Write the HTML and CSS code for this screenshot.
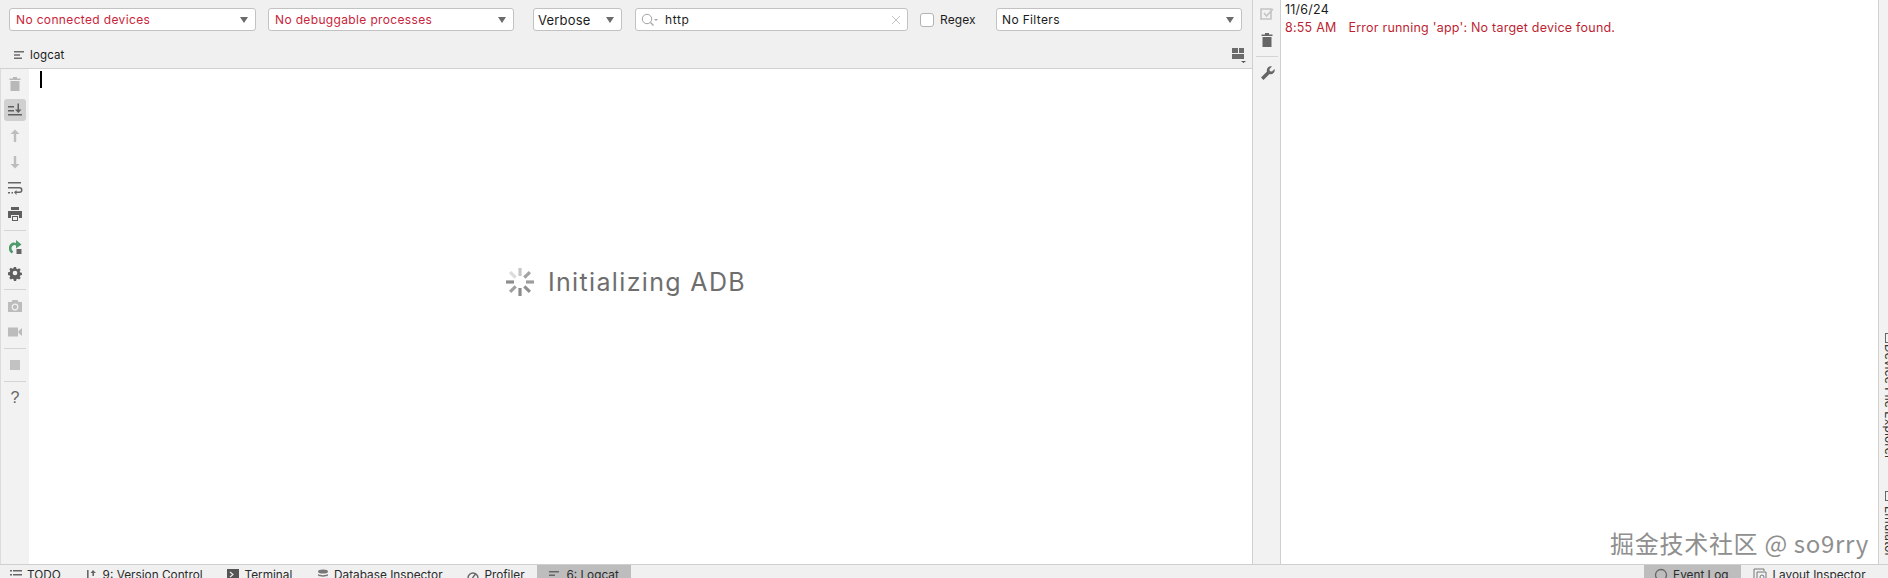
FILE: index.html
```html
<!DOCTYPE html>
<html lang="en">
<head>
<meta charset="utf-8">
<title>logcat</title>
<link rel="stylesheet" href="styles.css">
</head>
<body>
<div class="app">
  <div class="workspace">
    <section class="logcat">
      <div class="filters">
        <div class="combo combo-device"><span class="err">No connected devices</span><i class="caret"></i></div>
        <div class="combo combo-process"><span class="err">No debuggable processes</span><i class="caret"></i></div>
        <div class="combo combo-level"><span>Verbose</span><i class="caret"></i></div>
        <div class="search">
          <svg class="search-ico" viewBox="0 0 20 16" width="20" height="16"><circle cx="7" cy="7" r="4.7" fill="none" stroke="#a3a3a3" stroke-width="1"/><path d="M10.5 10.5l3 3" stroke="#a3a3a3" stroke-width="1.2"/><path d="M14 7h4l-2 2z" fill="#a3a3a3"/></svg>
          <span class="search-text">http</span>
          <svg class="clear" viewBox="0 0 10 10" width="10" height="10"><path d="M1 1l8 8M9 1l-8 8" stroke="#c4c4c4" stroke-width="1"/></svg>
        </div>
        <label class="regex"><i class="check"></i><span>Regex</span></label>
        <div class="combo combo-filter"><span>No Filters</span><i class="caret"></i></div>
      </div>
      <div class="tabrow">
        <div class="tab">
          <svg viewBox="0 0 12 10" width="12" height="10"><path d="M0 1h10v1.600H0zM0 4.200h6v1.600H0zM0 7.400h8V9H0z" fill="#6b6b6b"/></svg>
          <span>logcat</span>
        </div>
        <svg class="layout-ico" viewBox="0 0 16 16" width="16" height="16"><path d="M1 1h6v5H1zM8 1h5v5H8zM1 7h12v5H1z" fill="#6b6b6b"/><path d="M10 14h5l-2.500 2z" fill="#555"/></svg>
      </div>
      <div class="logbody">
        <aside class="rail">
          <button class="tool dim"><svg viewBox="0 0 16 16"><path d="M6 1h4v1.500h3.500V4h-11V2.500H6zM3.500 5h9v10h-9z" fill="#b8b8b8"/></svg></button>
          <button class="tool active"><svg viewBox="0 0 16 16"><path d="M1 4h6v1.500H1zM1 8h6v1.500H1zM1 12h14v1.500H1z" fill="#5f5f5f"/><path d="M10.500 1.500h1.500v6h2.500L11.250 11 8 7.500h2.500z" fill="#5f5f5f"/></svg></button>
          <button class="tool dim"><svg viewBox="0 0 16 16"><path d="M6.800 14V6H3.500L8 1.500 12.500 6H9.200v8z" fill="#bdbdbd"/></svg></button>
          <button class="tool dim"><svg viewBox="0 0 16 16"><path d="M6.800 2v8H3.500L8 14.500 12.500 10H9.200V2z" fill="#bdbdbd"/></svg></button>
          <button class="tool"><svg viewBox="0 0 16 16"><path d="M1 2h13v1.500H1zM1 7h11.500a2.500 2.500 0 0 1 0 6H9.500V15L7 12.250 9.500 10v1.500h3a1 1 0 0 0 0-3H1zM1 12h2v1.500H1zM4.500 12h1.500v1.500H4.500z" fill="#666"/></svg></button>
          <button class="tool"><svg viewBox="0 0 16 16"><path d="M4 1h8v3H4zM1 5h14v7h-3V9H4v3H1zM5 10h6v5H5z" fill="#5f5f5f"/><path d="M6 11h4v3H6z" fill="#f2f2f2"/></svg></button>
          <hr class="rule">
          <button class="tool tool-restart"><svg viewBox="0 0 16 16"><path d="M2 9a5 5 0 0 1 7-5V1L14.500 5.500 9 9.500V6.500A3 3 0 0 0 4.500 9c0 1.500.7 2.600 1.700 3.300L5 14.500A5.500 5.500 0 0 1 2 9z" fill="#4d9a6a"/><path d="M9.500 10h5v5h-5z" fill="#666"/></svg></button>
          <button class="tool"><svg viewBox="0 0 16 16"><path d="M6.700 1h2.600l.4 2 1.300.6 1.800-1.100 1.800 1.800-1.100 1.800.6 1.300 2 .4v2.600l-2 .4-.6 1.300 1.100 1.800-1.800 1.800-1.800-1.100-1.300.6-.4 2H6.700l-.4-2-1.300-.6-1.800 1.100-1.800-1.800 1.100-1.800-.6-1.300-2-.4V7.200l2-.4.6-1.300-1.100-1.800 1.800-1.800 1.800 1.100 1.300-.6z" transform="translate(1.100 1.100) scale(.86)" fill="#5f5f5f"/><circle cx="8" cy="8" r="2.300" fill="#f2f2f2"/></svg></button>
          <hr class="rule">
          <button class="tool"><svg viewBox="0 0 16 16"><path d="M5.500 2h5l1 2H15v10H1V4h3.500z" fill="#bcbcbc"/><circle cx="8" cy="9" r="2.800" fill="none" stroke="#f2f2f2" stroke-width="1.200"/></svg></button>
          <button class="tool"><svg viewBox="0 0 16 16"><path d="M1 3.500h10v9H1zM11.500 7l3.500-3v8l-3.500-3z" fill="#bcbcbc"/></svg></button>
          <hr class="rule">
          <button class="tool"><svg viewBox="0 0 16 16"><path d="M3 3h10v10H3z" fill="#c2c2c2"/></svg></button>
          <hr class="rule">
          <button class="tool help">?</button>
        </aside>
        <div class="console">
          <i class="caret-line"></i>
          <div class="status">
            <svg class="spinner" viewBox="0 0 30 30" width="30" height="30">
              <g stroke-width="3.200" stroke-linecap="butt">
                <path d="M15 1v8" stroke="#c6c6c6"/><path d="M24.900 5.100l-5.600 5.600" stroke="#a2a2a2"/><path d="M29 15h-8" stroke="#9d9d9d"/><path d="M24.900 24.900l-5.600-5.600" stroke="#8f8f8f"/>
                <path d="M15 29v-8" stroke="#8c8c8c"/><path d="M5.100 24.900l5.600-5.600" stroke="#a0a0a0"/><path d="M1 15h8" stroke="#8e8e8e"/><path d="M5.100 5.100l5.600 5.600" stroke="#dcdcdc"/>
              </g>
            </svg>
            <span>Initializing ADB</span>
          </div>
        </div>
      </div>
    </section>
    <aside class="rail rail-event">
      <button class="tool"><svg viewBox="0 0 16 16"><path d="M2 3h10v10H2z" fill="none" stroke="#c4c4c4" stroke-width="1.600"/><path d="M5 7l2.500 3L14 3" fill="none" stroke="#c4c4c4" stroke-width="1.600"/></svg></button>
      <button class="tool"><svg viewBox="0 0 16 16"><path d="M6 1h4v1.500h3.500V4h-11V2.500H6zM3.500 5h9v10h-9z" fill="#666"/></svg></button>
      <hr class="rule">
      <button class="tool"><svg viewBox="0 0 16 16"><path d="M2 12.500l6-6a4 4 0 0 1 5-5l-2.500 2.500.3 2.200 2.200.3L15.500 4a4 4 0 0 1-5 5l-6 6z" fill="#666"/></svg></button>
    </aside>
    <section class="eventlog">
      <div class="date">11/6/24</div>
      <div class="entry"><span class="time">8:55 AM</span><span>Error running 'app': No target device found.</span></div>
    </section>
    <aside class="stripe">
      <div class="vtool vtool-device"><i class="vbox"></i><span>Device File Explorer</span></div>
      <div class="vtool vtool-emu"><i class="vbox"></i><span>Emulator</span></div>
    </aside>
  </div>
  <footer class="statusbar">
    <div class="bar-item"><svg viewBox="0 0 12 12" width="12" height="12"><path d="M0 1h2v1.400H0zM3 1h9v1.400H3zM0 5h2v1.400H0zM3 5h9v1.400H3zM0 9h2v1.400H0zM3 9h9v1.400H3z" fill="#666"/></svg><span>TODO</span></div>
    <div class="bar-item"><svg viewBox="0 0 12 12" width="12" height="12"><path d="M1 1h1.600v8H10v1.600H1zM7 1l3 3H8v3H6.400V4H4.500z" fill="#666"/></svg><span>9: Version Control</span></div>
    <div class="bar-item"><svg viewBox="0 0 12 12" width="12" height="12"><path d="M0 0h12v12H0z" fill="#555"/><path d="M3 3l3 2.500L3 8" fill="none" stroke="#eee" stroke-width="1.200"/></svg><span>Terminal</span></div>
    <div class="bar-item"><svg viewBox="0 0 12 12" width="12" height="12"><ellipse cx="6" cy="2.500" rx="5" ry="2" fill="#777"/><path d="M1 5c1 1.500 9 1.500 10 0v1.600c-1 1.500-9 1.500-10 0zM1 8.500c1 1.500 9 1.500 10 0v1.600c-1 1.500-9 1.500-10 0z" fill="#777"/></svg><span>Database Inspector</span></div>
    <div class="bar-item"><svg viewBox="0 0 12 12" width="12" height="12"><circle cx="6" cy="9" r="5" fill="none" stroke="#666" stroke-width="1.400"/><path d="M5.500 9l3-4" stroke="#666" stroke-width="1.400"/></svg><span>Profiler</span></div>
    <div class="bar-item is-on"><svg viewBox="0 0 12 12" width="12" height="12"><path d="M0 2h10v1.400H0zM0 5.500h6v1.400H0zM0 9h8v1.400H0z" fill="#666"/></svg><span>6: Logcat</span></div>
    <div class="bar-right">
      <div class="bar-item is-on"><svg viewBox="0 0 14 14" width="14" height="14"><circle cx="7" cy="7" r="5.500" fill="none" stroke="#666" stroke-width="1.300"/></svg><span>Event Log</span></div>
      <div class="bar-item"><svg viewBox="0 0 14 14" width="14" height="14"><path d="M1 1h10v2M1 1v10h2" fill="none" stroke="#777" stroke-width="1"/><path d="M4 4h9v9H4z" fill="none" stroke="#777" stroke-width="1"/><circle cx="9" cy="9" r="2" fill="none" stroke="#777" stroke-width="1"/></svg><span>Layout Inspector</span></div>
    </div>
  </footer>
  <div class="watermark">掘金技术社区 @ so9rry</div>
</div>
</body>
</html>
```
FILE: styles.css
```css
* { box-sizing: border-box; }
html, body { margin: 0; height: 100%; overflow: hidden; }
body { font-family: Inter, "Liberation Sans", sans-serif; font-size: 12px; color: #1c1c1c; background: #fff; }
.app { position: relative; width: 1888px; height: 578px; display: flex; flex-direction: column; overflow: hidden; }
.workspace { flex: 1; min-height: 0; display: flex; }

.logcat { width: 1252px; flex: none; display: flex; flex-direction: column; background: #f0f0f0; }
.filters { height: 36px; display: flex; align-items: flex-start; padding: 8px 0 0 9px; letter-spacing: .35px; }
.combo, .search { height: 23px; flex: none; background: #fff; border: 1px solid #c2c2c2; border-radius: 3px; display: flex; align-items: center; }
.combo { padding: 0 7px 0 6px; justify-content: space-between; }
.combo-device { width: 247px; }
.combo-process { width: 246px; margin-left: 12px; }
.combo-level { width: 89px; margin-left: 19px; padding-left: 4px; font-size: 13px; letter-spacing: .2px; }
.search { width: 273px; margin-left: 13px; padding: 0 6px 0 4px; }
.combo-filter { width: 246px; margin-left: 14px; padding-left: 5px; }
.err { color: #c9243a; }
.caret { width: 0; height: 0; border-left: 4.500px solid transparent; border-right: 4.500px solid transparent; border-top: 6px solid #6b6b6b; }
.search-text { margin-left: 5px; flex: 1; letter-spacing: .6px; }
.regex { width: 62px; flex: none; margin-left: 12px; height: 23px; display: flex; align-items: center; gap: 6px; letter-spacing: .1px; }
.check { width: 14px; height: 14px; background: #fff; border: 1px solid #b4b4b4; border-radius: 3px; }

.tabrow { height: 33px; flex: none; display: flex; align-items: center; justify-content: space-between; padding: 5px 5px 0 14px; border-bottom: 1px solid #d0d0d0; }
.tab { display: flex; align-items: center; gap: 4px; }
.tab span { font-size: 11.500px; letter-spacing: .15px; }

.logbody { flex: 1; min-height: 0; display: flex; }
.rail { width: 29px; flex: none; background: #f2f2f2; display: flex; flex-direction: column; align-items: center; border-left: 1px solid #dcdcdc; }
.tool { width: 22px; height: 22px; padding: 3px; margin: 0; border: 0; border-radius: 3px; background: none; display: block; flex: none; }
.tool svg { display: block; width: 16px; height: 16px; }
.rail .tool + .tool { margin-top: 4px; }
.logbody .rail { padding-top: 4px; }
.tool.active { background: #d0d0d0; }
.help { color: #666; font-size: 16px; line-height: 16px; padding: 3px 0; text-align: center; }
.rule { width: 22px; height: 1px; margin: 5px 0 0; border: 0; background: #d4d4d4; flex: none; }
.rule + .tool { margin-top: 5px; }

.console { flex: 1; position: relative; background: #fff; display: flex; align-items: center; justify-content: center; padding: 0 30px 70px 0; }
.caret-line { position: absolute; left: 11px; top: 2px; width: 2px; height: 17px; background: #000; }
.status { display: flex; align-items: center; gap: 13px; color: #6e6e6e; font-size: 25px; letter-spacing: 1.350px; }

.rail-event { border-left: 1px solid #d0d0d0; border-right: 1px solid #d0d0d0; padding-top: 3px; }

.eventlog { flex: 1; background: #fff; padding: 1px 0 0 4px; line-height: 18px; font-size: 12.500px; letter-spacing: .22px; }
.date { color: #1c1c1c; }
.entry { color: #bd1f33; display: flex; gap: 12px; }

.stripe { width: 10px; flex: none; background: #f2f2f2; border-left: 1px solid #d0d0d0; overflow: hidden; padding-top: 333px; }
.vtool { writing-mode: vertical-rl; display: flex; align-items: center; gap: 1px; margin-left: 3px; font-size: 12px; letter-spacing: .15px; white-space: nowrap; color: #333; }
.vtool-emu { margin-top: 31px; gap: 5px; }
.vbox { width: 10px; height: 10px; border: 1px solid #666; flex: none; }

.statusbar { height: 14px; flex: none; background: #f0f0f0; border-top: 1px solid #cfcfcf; display: flex; align-items: flex-start; overflow: hidden; font-size: 11.800px; }
.bar-item { height: 20px; padding: 3px 12.400px; display: flex; align-items: center; gap: 5px; color: #2b2b2b; white-space: nowrap; }
.bar-item:first-child { padding-left: 10px; }
.bar-item svg { flex: none; }
.bar-item.is-on { background: #bdbdbd; }
.bar-right { margin-left: auto; display: flex; padding-right: 10px; }

.watermark { position: absolute; right: 19px; bottom: 19px; font-family: "Noto Sans CJK SC", "Noto Sans", sans-serif; font-size: 24px; line-height: 32px; color: #8f8f8f; letter-spacing: .7px; text-shadow: 1px 1px 0 #fff; }
```
